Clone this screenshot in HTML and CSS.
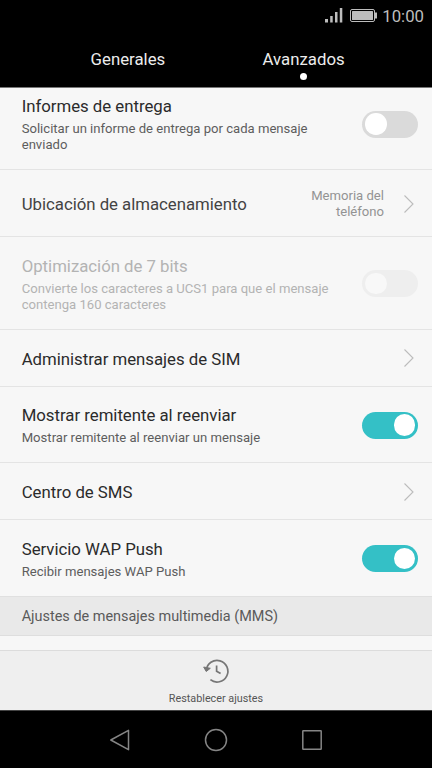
FILE: index.html
```html
<!DOCTYPE html>
<html lang="es">
<head>
<meta charset="utf-8">
<title>Ajustes de mensajes</title>
<link rel="stylesheet" href="styles.css">
</head>
<body>
<div class="phone">
  <div class="status">
    <svg class="status-icons" width="54" height="18" viewBox="0 0 54 18" fill="#bdbdbd">
      <path d="M1 12h3v3.500h-3zM6.200 9h2.500v6.500h-2.500zM11 5h2.500v10.500h-2.500zM15.800 1h2.500v14.500h-2.500z"/>
      <rect x="26.500" y="2.500" width="24" height="12" rx="1.500" fill="none" stroke="#bdbdbd"/>
      <rect x="28" y="4" width="21" height="9" rx=".5"/>
      <path d="M51 5.500h2v6h-2z"/>
    </svg>
    <span class="clock">10:00</span>
  </div>
  <div class="tabs">
    <div class="tab">Generales</div>
    <div class="tab active">Avanzados</div>
  </div>
  <div class="list">
    <div class="row r1">
      <div class="text"><div class="title">Informes de entrega</div><div class="sub">Solicitar un informe de entrega por cada mensaje enviado</div></div>
      <div class="switch"></div>
    </div>
    <div class="row r2">
      <div class="text"><div class="title muted">Ubicación de almacenamiento</div></div>
      <div class="value">Memoria del teléfono</div>
      <svg class="chevron" width="12" height="20" viewBox="0 0 12 20"><path d="M1.500 1.500 10 10 1.500 18.500"/></svg>
    </div>
    <div class="row r3 disabled">
      <div class="text"><div class="title">Optimización de 7 bits</div><div class="sub">Convierte los caracteres a UCS1 para que el mensaje contenga 160 caracteres</div></div>
      <div class="switch"></div>
    </div>
    <div class="row r4">
      <div class="text"><div class="title">Administrar mensajes de SIM</div></div>
      <svg class="chevron" width="12" height="20" viewBox="0 0 12 20"><path d="M1.500 1.500 10 10 1.500 18.500"/></svg>
    </div>
    <div class="row r5">
      <div class="text"><div class="title">Mostrar remitente al reenviar</div><div class="sub">Mostrar remitente al reenviar un mensaje</div></div>
      <div class="switch on"></div>
    </div>
    <div class="row r6">
      <div class="text"><div class="title">Centro de SMS</div></div>
      <svg class="chevron" width="12" height="20" viewBox="0 0 12 20"><path d="M1.500 1.500 10 10 1.500 18.500"/></svg>
    </div>
    <div class="row r7">
      <div class="text"><div class="title">Servicio WAP Push</div><div class="sub">Recibir mensajes WAP Push</div></div>
      <div class="switch on"></div>
    </div>
    <div class="section">Ajustes de mensajes multimedia (MMS)</div>
  </div>
  <div class="footer">
    <svg width="30" height="26" viewBox="0 0 30 26" fill="none" stroke="#767676" stroke-width="1.700">
      <path d="M5.300 12.300A10.800 10.800 0 1 1 9.400 21.700"/>
      <path d="M15.600 7.500V13.200L19.600 15.500"/>
      <path d="M2.700 9 5.200 13.500 9.300 10.300Z" fill="#767676" stroke-width="1"/>
    </svg>
    <span class="footer-label">Restablecer ajustes</span>
  </div>
  <div class="nav">
    <svg width="24" height="24" viewBox="0 0 24 24"><path d="M20.500 2.300V21.700L2.800 12Z"/></svg>
    <svg width="24" height="24" viewBox="0 0 24 24"><circle cx="12" cy="12" r="10.500"/></svg>
    <svg width="24" height="24" viewBox="0 0 24 24"><rect x="2.800" y="2.800" width="18.400" height="18.400" rx=".5"/></svg>
  </div>
</div>
</body>
</html>
```
FILE: styles.css
```css
* { box-sizing: border-box; }
body { margin: 0; font-family: Roboto, "Liberation Sans", sans-serif; }
.phone { width: 432px; height: 768px; display: flex; flex-direction: column; overflow: hidden; background: #f7f7f7; }
.status { height: 32px; flex: none; background: #000; display: flex; justify-content: flex-end; align-items: center; gap: 4px; padding-right: 8px; }
.clock { color: #bdbdbd; font-size: 16.8px; line-height: 20px; }
.tabs { height: 55px; flex: none; background: #000; display: flex; padding: 0 40.5px 0 40px; }
.tab { flex: 1; display: flex; flex-direction: column; align-items: center; padding-top: 17px; color: #ececec; font-size: 16.8px; line-height: 20px; }
.tab.active::after { content: ""; width: 7px; height: 7px; margin-top: 4px; border-radius: 50%; background: #fff; }
.list { height: 563px; flex: none; display: flex; flex-direction: column; border-top: 1px solid #777; }
.row { flex: none; display: flex; align-items: center; padding: 1px 14px 0 21.7px; border-bottom: 1px solid #e4e4e4; }
.r1 { height: 82px; padding-bottom: 10px; }
.r2 { height: 67px; }
.r3 { height: 93px; }
.r4 { height: 57px; }
.r5 { height: 76px; }
.r6 { height: 57px; }
.r7 { height: 77px; border-bottom-color: #e0e0e0; }
.text { flex: 1; min-width: 0; }
.title { font-size: 16.8px; line-height: 20px; color: #2b2b2b; letter-spacing: -0.02px; }
.title.muted { color: #434343; }
.sub { width: 312px; margin-top: 5px; font-size: 13.1px; line-height: 15.6px; color: #5d5d5d; }
.r5 .text, .r7 .text, .r3 .text { padding-top: 1px; }
.disabled .title, .disabled .sub { color: #b3b3b3; }
.value { width: 80px; margin-right: 18px; text-align: right; font-size: 13.1px; line-height: 15.5px; color: #939393; }
.chevron { margin-right: 3px; margin-left: 1px; fill: none; stroke: #bcbcbc; stroke-width: 1.1; }
.value + .chevron { margin-left: 0; }
.r2 .value { margin-right: 19px; }
.r4 .chevron { margin-bottom: 1px; }
.switch { width: 56px; height: 27px; flex: none; display: flex; align-items: center; border-radius: 14px; padding: 0 3px; background: #dadada; }
.switch::after { content: ""; width: 21.500px; height: 21.500px; border-radius: 50%; background: #fff; }
.switch.on { background: #34c0c6; justify-content: flex-end; }
.disabled .switch { background: #eee; }
.disabled .switch::after { background: #f8f8f8; }
.section { height: 39px; flex: none; padding: 0 21.7px; background: #e9e9e9; border-bottom: 1px solid #dedede; color: #5a5a5a; font-size: 14.45px; line-height: 39px; }
.footer { height: 60px; flex: none; display: flex; flex-direction: column; align-items: center; padding-top: 7px; background: #efefef; border-top: 1px solid #dcdcdc; }
.footer-label { margin-top: 8px; font-size: 10.8px; line-height: 14px; color: #555; }
.nav { flex: 1; display: flex; justify-content: center; align-items: center; gap: 72px; background: #000; border-top: 1px solid #444; }
.nav svg { fill: none; stroke: #858585; stroke-width: 1.5; stroke-linejoin: round; }
```
